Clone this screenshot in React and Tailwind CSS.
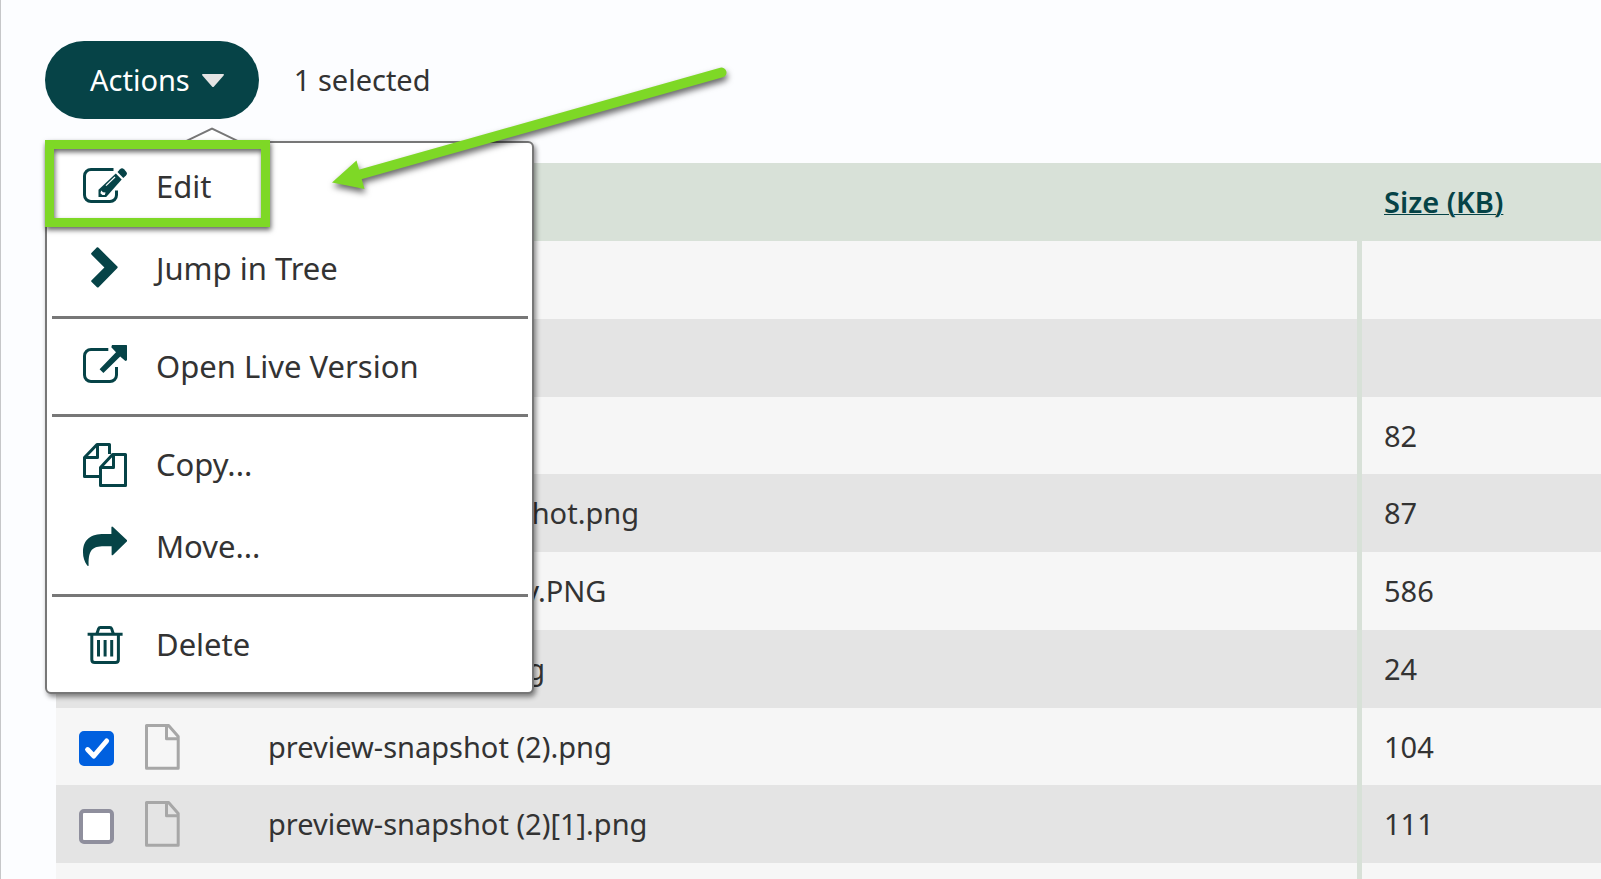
import { useState } from "react";

const files = [
	{ name: "images", size: "" },
	{ name: "documents", size: "" },
	{ name: "preview-home.png", size: "82" },
	{ name: "preview-card-snapshot.png", size: "87" },
	{ name: "previewed-directory.PNG", size: "586" },
	{ name: "preview-contact.png", size: "24" },
	{ name: "preview-snapshot (2).png", size: "104" },
	{ name: "preview-snapshot (2)[1].png", size: "111" },
];

function EditIcon() {
	return (
		<svg viewBox="0 0 44 44" className="size-11 shrink-0" aria-hidden="true">
			<path
				d="M30.5 4.5H8A6.5 6.5 0 0 0 1.5 11V30A6.5 6.5 0 0 0 8 36.5H27A6.5 6.5 0 0 0 33.5 30V25.5"
				fill="none"
				stroke="currentColor"
				strokeWidth="3"
			/>
			<path
				d="M34.5 7L37 4.2Q39 2.4 41 4.2L43 6.4Q44.8 8.4 43 10.4L40.3 13Z"
				fill="currentColor"
			/>
			<path d="M32.8 8.6L38.7 14.6L23.2 32H15.5V24.8Z" fill="currentColor" />
			<path d="M23 20.6L32 12" stroke="#fff" strokeWidth="1.2" />
			<path d="M18.2 25.4L20 27.2L22.6 27.6L21.8 30H19.4L17.4 28.2Z" fill="#fff" />
		</svg>
	);
}

function ChevronIcon() {
	return (
		<svg viewBox="0 0 44 44" className="size-11 shrink-0" aria-hidden="true">
			<path
				d="M14 .3Q15 0 15.6 .8L34.4 19.6Q35 20.3 34.4 21L15.6 40.2Q14.8 41 14 40.2L8.4 34.8Q7.8 34 8.4 33.4L21.4 20.4L8.4 7.4Q7.8 6.6 8.4 6Z"
				fill="currentColor"
			/>
		</svg>
	);
}

function OpenIcon() {
	return (
		<svg viewBox="0 0 44 44" className="size-11 shrink-0" aria-hidden="true">
			<path
				d="M25.3 4.5H8A6.5 6.5 0 0 0 1.5 11V30A6.5 6.5 0 0 0 8 36.5H27A6.5 6.5 0 0 0 33.5 30V22"
				fill="none"
				stroke="currentColor"
				strokeWidth="3"
			/>
			<path
				d="M29 0H43Q44.3 0 44.3 1.3V15.2L42.4 16L37.2 11.6L20.4 28L16.6 24.2L33 7.2L28.3 2.2Z"
				fill="currentColor"
			/>
		</svg>
	);
}

function CopyIcon() {
	return (
		<svg
			viewBox="0 0 44 44"
			className="size-11 shrink-0"
			fill="none"
			stroke="currentColor"
			strokeWidth="3"
			strokeLinejoin="round"
			aria-hidden="true"
		>
			<path d="M17 33.5H1.5V14.5L14 1.5H26.5V11" />
			<path d="M1.5 14.5H14.5V1.5" />
			<path d="M17.5 24.5L29.6 11.5H42.5V42.5H17.5Z" />
			<path d="M17.5 24.5H30.5V11.5" />
		</svg>
	);
}

function MoveIcon() {
	return (
		<svg viewBox="0 0 44 44" className="size-11 shrink-0" aria-hidden="true">
			<path
				d="M28.4 2.2Q28.8 1 30 1.9L43.8 15Q44.6 15.8 43.8 16.6L30 30Q28.8 30.8 28.6 29.4V21.2H21C9 21.2 5.4 25 5.6 40.4Q5.2 41.6 4.2 40.6C1.4 36.4 0 32.6 0 27.6C0 14 8 9 21 9H28.4Z"
				fill="currentColor"
			/>
		</svg>
	);
}

function TrashIcon() {
	return (
		<svg
			viewBox="0 0 44 44"
			className="size-11 shrink-0"
			fill="none"
			stroke="currentColor"
			strokeWidth="3"
			aria-hidden="true"
		>
			<path d="M4.6 11.2H39.6" />
			<path d="M14 10.5L15.6 5.6Q16 4.4 17.4 4.4H26.8Q28.2 4.4 28.6 5.6L30.2 10.5" />
			<path d="M8.8 12V36.4Q8.8 39.4 11.8 39.4H32.4Q35.4 39.4 35.4 36.4V12" />
			<path d="M15.5 17V33.4M22.1 17V33.4M28.7 17V33.4" />
		</svg>
	);
}

function FileIcon() {
	return (
		<svg
			viewBox="0 0 35 46"
			className="h-[46px] w-[35px] text-[#a7a7a7]"
			fill="none"
			stroke="currentColor"
			strokeWidth="3"
			strokeLinejoin="round"
			aria-hidden="true"
		>
			<path d="M1.5 1.5H23.6L33.2 12.4V44.2H1.5Z" />
			<path d="M21.5 1.5V14.8H33.2" />
		</svg>
	);
}

const groups = [
	[
		{ label: "Edit", Icon: EditIcon, highlight: true },
		{ label: "Jump in Tree", Icon: ChevronIcon },
	],
	[{ label: "Open Live Version", Icon: OpenIcon }],
	[
		{ label: "Copy...", Icon: CopyIcon },
		{ label: "Move...", Icon: MoveIcon },
	],
	[{ label: "Delete", Icon: TrashIcon }],
];

function ActionsMenu() {
	return (
		<div className="absolute top-[100px] left-0 z-10 w-[489px] rounded-md border-2 border-[#777] bg-white pt-[3px] pb-1.5 shadow-[2px_3px_5px_rgba(0,0,0,0.45)]">
			<svg
				viewBox="0 0 60 16"
				className="absolute -top-4 left-[135px] h-4 w-[60px]"
				aria-hidden="true"
			>
				<path d="M0 16L30 1L60 16Z" fill="#fff" />
				<path d="M0 16L30 1.6L60 16" fill="none" stroke="#777" strokeWidth="2" />
			</svg>
			{groups.map((items, i) => (
				<div key={i}>
					{i > 0 && (
						<hr className="mt-1.5 mr-1 mb-[7px] ml-[5px] border-t-3 border-[#777]" />
					)}
					{items.map(({ label, Icon, highlight }) => (
						<div key={label} className="relative">
							<button
								type="button"
								className="flex h-[82px] w-full items-center gap-[29px] pl-9 text-left text-[31px] text-[#333]"
							>
								<span className="text-[#064347]">
									<Icon />
								</span>
								<span className="pb-0.5">{label}</span>
							</button>
							{highlight && (
								<div className="pointer-events-none absolute -top-1.5 -left-0.5 h-[87px] w-[225px] border-9 border-[#7ed826] shadow-[1px_3px_5px_rgba(0,0,0,0.6),inset_1px_3px_5px_rgba(0,0,0,0.6)]" />
							)}
						</div>
					))}
				</div>
			))}
		</div>
	);
}

function Pointer() {
	return (
		<svg
			viewBox="0 0 410 140"
			className="pointer-events-none absolute top-[60px] left-[323px] z-20 h-[140px] w-[410px] drop-shadow-[1px_4px_3px_rgba(0,0,0,0.6)]"
			aria-hidden="true"
		>
			<path
				d="M397.5 12.5L36 114.5"
				stroke="#7ed826"
				strokeWidth="10"
				strokeLinecap="round"
			/>
			<path d="M8 122.5L32.5 100.5L40.5 129Z" fill="#7ed826" />
		</svg>
	);
}

export default function App() {
	const [selected, setSelected] = useState(["preview-snapshot (2).png"]);

	const toggle = (name) => {
		setSelected((prev) =>
			prev.includes(name)
				? prev.filter((n) => n !== name)
				: [...prev, name],
		);
	};

	return (
		<main className="relative h-screen overflow-hidden border-l border-[#c6c7c9] bg-[#fcfdff] pt-[41px] font-['Noto_Sans',sans-serif] text-[#333]">
			<div className="relative ml-11 flex items-center gap-[35px] text-[29px]">
				<button
					type="button"
					className="flex h-[78px] items-center gap-3 rounded-full bg-[#064347] pr-[35px] pl-[45px] text-white"
				>
					Actions
					<svg viewBox="0 0 22 13" className="h-[13px] w-[22px]" aria-hidden="true">
						<path
							d="M1 0H21Q22.6 .2 21.6 1.6L12 12.4Q11 13.4 10 12.4L.4 1.6Q-.6 .2 1 0Z"
							fill="#e4e4e4"
						/>
					</svg>
				</button>
				<span>{selected.length} selected</span>
				<ActionsMenu />
			</div>

			<div className="mt-11 ml-[55px]">
				<table className="w-full table-fixed border-separate border-spacing-0 text-left text-[29px]">
					<colgroup>
						<col className="w-[89px]" />
						<col className="w-[123px]" />
						<col />
						<col className="w-[239px]" />
					</colgroup>
					<thead>
						<tr className="h-[78px] bg-[#d8e1d8]">
							<th className="p-0" />
							<th className="p-0" />
							<th className="p-0 font-semibold">
								<a href="#name" className="text-[#064347] underline">
									Name
								</a>
							</th>
							<th className="p-0 pl-[22px] font-semibold">
								<a
									href="#size"
									className="text-[#064347] underline decoration-1"
								>
									Size (KB)
								</a>
							</th>
						</tr>
					</thead>
					<tbody>
						{files.map((file) => (
							<tr
								key={file.name}
								className="h-[78px] odd:bg-[#f6f6f6] even:bg-[#e4e4e4] nth-[4n+3]:h-[77px]"
							>
								<td className="p-0 pt-1 pl-[23px]">
									<label className="relative block size-[35px]">
										<input
											type="checkbox"
											aria-label={file.name}
											checked={selected.includes(file.name)}
											onChange={() => toggle(file.name)}
											className="peer block size-[35px] appearance-none rounded-[5px] border-4 border-[#8f8f9d] bg-white checked:border-[#0060df] checked:bg-[#0060df]"
										/>
										<svg
											viewBox="0 0 35 35"
											className="pointer-events-none absolute inset-0 hidden size-[35px] peer-checked:block"
											aria-hidden="true"
										>
											<path
												d="M8.6 18.6L14.8 25L27.6 10"
												fill="none"
												stroke="#fff"
												strokeWidth="5"
												strokeLinecap="round"
												strokeLinejoin="round"
											/>
										</svg>
									</label>
								</td>
								<td className="p-0">
									<FileIcon />
								</td>
								<td className="border-r-5 border-[#d8e1d8] p-0 whitespace-nowrap">
									{file.name}
								</td>
								<td className="p-0 pl-[22px]">{file.size}</td>
							</tr>
						))}
					</tbody>
					<tfoot>
						<tr className="h-[78px] bg-[#f6f6f6]">
							<td colSpan={3} className="border-r-5 border-[#d8e1d8]" />
							<td />
						</tr>
					</tfoot>
				</table>
			</div>

			<Pointer />
		</main>
	);
}
